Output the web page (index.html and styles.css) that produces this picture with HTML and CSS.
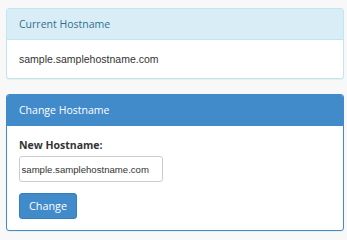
FILE: index.html
```html
<!DOCTYPE html>
<html>
<head>
<meta charset="utf-8">
<link rel="stylesheet" href="styles.css">
</head>
<body>
<div class="page">
  <div class="panel panel-info">
    <div class="panel-heading">Current Hostname</div>
    <div class="panel-body">sample.samplehostname.com</div>
  </div>
  <div class="panel panel-primary">
    <div class="panel-heading">Change Hostname</div>
    <div class="panel-body">
      <form class="form">
        <div class="form-group">
          <label class="label" for="hn">New Hostname:</label>
          <input class="input" id="hn" type="text" value="sample.samplehostname.com">
        </div>
        <button class="btn" type="button">Change</button>
      </form>
    </div>
  </div>
</div>
</body>
</html>
```
FILE: styles.css
```css
html, body {
  margin: 0;
  padding: 0;
  background: #f8f8f8;
}
.page {
  padding: 8px 3px 0 6px;
  font-family: "Open Sans", "Liberation Sans", sans-serif;
  font-size: 10.5px;
  line-height: 15px;
  color: #333;
}
.panel {
  background: #fff;
  border: 1px solid #ddd;
  border-radius: 3px;
  margin-bottom: 15px;
  box-shadow: 0 1px 1px rgba(0,0,0,0.05);
}
.panel-heading {
  padding: 7.5px 12px;
  border-bottom: 1px solid transparent;
  border-radius: 2px 2px 0 0;
}
.panel-body {
  padding: 11.5px 12px;
}
.panel-info {
  border-color: #bce8f1;
}
.panel-info .panel-heading {
  background: #d9edf7;
  color: #31708f;
  border-bottom-color: #bce8f1;
}
.panel-info .panel-body {
  font-family: "Liberation Sans", Arial, sans-serif;
  color: #333;
}
.panel-primary {
  border-color: #428bca;
}
.panel-primary .panel-heading {
  background: #428bca;
  color: #fff;
  border-bottom-color: #428bca;
}
.form {
  margin: 0;
}
.form-group {
  display: flex;
  flex-direction: column;
  align-items: flex-start;
  margin-bottom: 11px;
}
.label {
  font-weight: 700;
  margin-bottom: 3.75px;
}
.input {
  box-sizing: border-box;
  width: 144px;
  height: 25.5px;
  padding: 0 1.5px;
  margin: 0;
  border: 1px solid #ccc;
  border-radius: 3px;
  font-family: "Liberation Sans", Arial, sans-serif;
  font-size: 9.6px;
  color: #333;
  background: #fff;
  outline: none;
}
.btn {
  box-sizing: border-box;
  height: 26px;
  padding: 0 9px;
  margin: 0;
  border: 1px solid #357ebd;
  border-radius: 3px;
  background: #428bca;
  color: #fff;
  font-family: "Open Sans", "Liberation Sans", sans-serif;
  font-size: 10.8px;
  line-height: 15px;
  display: block;
}
```
